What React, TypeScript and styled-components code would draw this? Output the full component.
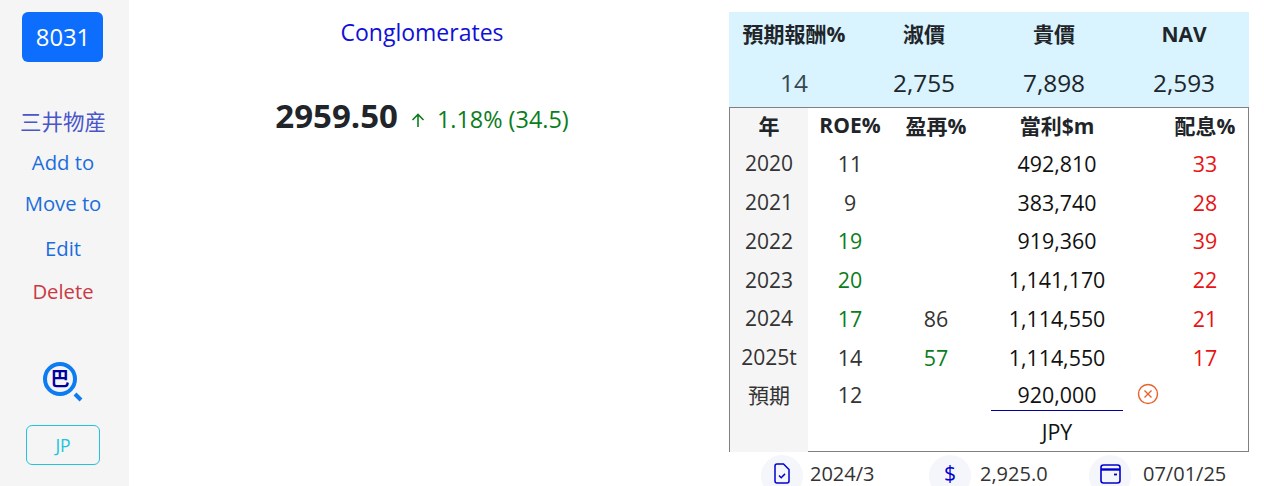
import React from "react";
import styled, { createGlobalStyle } from "styled-components";

const summary = [
  { label: "預期報酬%", value: "14", muted: true },
  { label: "淑價", value: "2,755" },
  { label: "貴價", value: "7,898" },
  { label: "NAV", value: "2,593" },
];

type Tone = "plain" | "good" | "bad";

const rows: { year: string; roe: string; roeTone?: Tone; reinvest?: string; reinvestTone?: Tone; profit: string; payout: string }[] = [
  { year: "2020", roe: "11", profit: "492,810", payout: "33" },
  { year: "2021", roe: "9", profit: "383,740", payout: "28" },
  { year: "2022", roe: "19", roeTone: "good", profit: "919,360", payout: "39" },
  { year: "2023", roe: "20", roeTone: "good", profit: "1,141,170", payout: "22" },
  { year: "2024", roe: "17", roeTone: "good", reinvest: "86", profit: "1,114,550", payout: "21" },
  { year: "2025t", roe: "14", reinvest: "57", reinvestTone: "good", profit: "1,114,550", payout: "17" },
];

const App: React.FC = () => {
  return (
    <Page>
      <GlobalStyle />
      <Sidebar>
        <CodeButton>8031</CodeButton>
        <CompanyName>三井物産</CompanyName>
        <SideLink $top={9}>Add to</SideLink>
        <SideLink $top={10}>Move to</SideLink>
        <SideLink $top={14}>Edit</SideLink>
        <SideLink $top={12} $danger>
          Delete
        </SideLink>
        <SearchIcon viewBox="0 0 42 42" width="42" height="42">
          <circle cx="18" cy="18" r="15" fill="none" stroke="#0d7cf0" strokeWidth="4" />
          <SearchGlyph x="18" y="25" textAnchor="middle">
            巴
          </SearchGlyph>
          <path d="M33 33l6 6" stroke="#0d7cf0" strokeWidth="4" />
        </SearchIcon>
        <MarketButton>JP</MarketButton>
      </Sidebar>

      <Main>
        <Sector>Conglomerates</Sector>
        <Quote>
          <Price>2959.50</Price>
          <UpArrow viewBox="0 0 16 16" width="16" height="16">
            <path d="M8 15V2.500M2.500 8L8 2.500l5.500 5.500" fill="none" stroke="#0a7d1c" strokeWidth="1.600" />
          </UpArrow>
          <Change>1.18% (34.5)</Change>
        </Quote>
      </Main>

      <Panel>
        <Summary>
          {summary.map((item) => (
            <SummaryCell key={item.label}>
              <SummaryLabel>{item.label}</SummaryLabel>
              <SummaryValue $muted={item.muted}>{item.value}</SummaryValue>
            </SummaryCell>
          ))}
        </Summary>

        <Table>
          <YearCell $head>年</YearCell>
          <HeadCell>ROE%</HeadCell>
          <HeadCell>盈再%</HeadCell>
          <HeadCell>當利$m</HeadCell>
          <Cell />
          <HeadCell>配息%</HeadCell>

          {rows.map((row) => (
            <React.Fragment key={row.year}>
              <YearCell>{row.year}</YearCell>
              <Cell $tone={row.roeTone}>{row.roe}</Cell>
              <Cell $tone={row.reinvestTone}>{row.reinvest}</Cell>
              <Cell $dark>{row.profit}</Cell>
              <Cell />
              <Cell $tone="bad">{row.payout}</Cell>
            </React.Fragment>
          ))}

          <YearCell>預期</YearCell>
          <Cell>12</Cell>
          <Cell />
          <Cell>
            <ForecastInput>920,000</ForecastInput>
          </Cell>
          <Cell>
            <ClearIcon viewBox="0 0 22 22" width="22" height="22">
              <circle cx="11" cy="11" r="9.500" fill="none" stroke="#e8612c" strokeWidth="1.400" />
              <path d="M7.500 7.500l7 7M14.500 7.500l-7 7" stroke="#e8612c" strokeWidth="1.400" />
            </ClearIcon>
          </Cell>
          <Cell />

          <YearCell />
          <Cell />
          <Cell />
          <Cell $dark>JPY</Cell>
          <Cell />
          <Cell />
        </Table>

        <Footer>
          <FooterItem>
            <IconDisc>
              <svg viewBox="0 0 16 21" width="16" height="21">
                <path d="M3 1h6.500l5.500 5.500V18a2 2 0 0 1-2 2H3a2 2 0 0 1-2-2V3a2 2 0 0 1 2-2z" fill="none" stroke="#0000d0" strokeWidth="1.500" />
                <path d="M5 12.500l2.200 2.200 3.800-3.800" fill="none" stroke="#0000d0" strokeWidth="1.500" />
              </svg>
            </IconDisc>
            <FooterText $gap={7}>2024/3</FooterText>
          </FooterItem>
          <FooterItem>
            <IconDisc>
              <Dollar>$</Dollar>
            </IconDisc>
            <FooterText $gap={9}>2,925.0</FooterText>
          </FooterItem>
          <FooterItem>
            <IconDisc>
              <svg viewBox="0 0 21 21" width="21" height="21">
                <rect x="1" y="2" width="19" height="18" rx="2.500" fill="none" stroke="#0000d0" strokeWidth="1.600" />
                <path d="M1 6.500h19" stroke="#0000d0" strokeWidth="2.400" />
                <path d="M14 11.500h3" stroke="#0000d0" strokeWidth="1.800" />
              </svg>
            </IconDisc>
            <FooterText $gap={12}>07/01/25</FooterText>
          </FooterItem>
        </Footer>
      </Panel>
    </Page>
  );
};

const GlobalStyle = createGlobalStyle`
  html, body {
    margin: 0;
    padding: 0;
    background: #fff;
    overflow: hidden;
  }
  * {
    box-sizing: border-box;
  }
  body {
    font-family: "Open Sans", "Noto Sans CJK TC", sans-serif;
    color: #212529;
  }
`;

const Page = styled.div`
  display: flex;
  width: 1264px;
  height: 486px;
  overflow: hidden;
`;

const Sidebar = styled.aside`
  display: flex;
  flex-direction: column;
  align-items: center;
  flex: 0 0 129px;
  height: 486px;
  padding: 12px 3px 0 0;
  background: #f5f5f5;
  font-size: 20.3px;
`;

const CodeButton = styled.div`
  display: flex;
  align-items: center;
  justify-content: center;
  width: 81px;
  height: 50px;
  margin-right: 2px;
  padding-left: 2px;
  border-radius: 6px;
  background: #0d6efd;
  color: #fff;
  font-size: 23.800px;
`;

const CompanyName = styled.div`
  margin-top: 44px;
  color: #4a55c8;
  font-size: 21.500px;
  line-height: 32px;
`;

const SideLink = styled.div<{ $top?: number; $danger?: boolean }>`
  margin-top: ${(p) => p.$top ?? 6}px;
  color: ${(p) => (p.$danger ? "#c93a45" : "#1c6ddc")};
  line-height: 31px;
`;

const SearchIcon = styled.svg`
  margin-top: 54px;
`;

const SearchGlyph = styled.text`
  fill: #0000a0;
  font-family: "Noto Sans CJK TC", sans-serif;
  font-size: 19px;
  font-weight: 700;
`;

const MarketButton = styled.div`
  display: flex;
  align-items: center;
  justify-content: center;
  width: 74px;
  height: 40px;
  margin-top: 22px;
  border: 1px solid #22c3dc;
  border-radius: 6px;
  color: #22c3dc;
  font-size: 17.500px;
`;

const Main = styled.main`
  flex: 0 0 586px;
  display: flex;
  flex-direction: column;
  align-items: center;
  padding-top: 16px;
`;

const Sector = styled.div`
  color: #1010d8;
  font-size: 23px;
  line-height: 33px;
`;

const Quote = styled.div`
  display: flex;
  align-items: center;
  margin-top: 43px;
`;

const Price = styled.span`
  font-size: 33px;
  font-weight: 700;
  line-height: 48px;
`;

const UpArrow = styled.svg`
  margin: 7px 0 0 12px;
`;

const Change = styled.span`
  margin: 5px 0 0 11px;
  color: #0a7d1c;
  font-size: 23.400px;
`;

const Panel = styled.section`
  flex: 0 0 520px;
  min-width: 0;
  margin-left: 14px;
  padding-top: 12px;
`;

const Summary = styled.div`
  display: grid;
  grid-template-columns: repeat(4, 1fr);
  height: 95px;
  background: #d9f3ff;
`;

const SummaryCell = styled.div`
  display: flex;
  flex-direction: column;
  align-items: center;
`;

const SummaryLabel = styled.div`
  margin-top: 6px;
  font-size: 21px;
  font-weight: 700;
  line-height: 32px;
`;

const SummaryValue = styled.div<{ $muted?: boolean }>`
  margin-top: 15px;
  font-size: 24.400px;
  line-height: 36px;
  color: ${(p) => (p.$muted ? "#37474f" : "#212529")};
`;

const Table = styled.div`
  display: grid;
  grid-template-columns: 78px 84px 88px 154px 28px 86px;
  grid-template-rows: 36px repeat(6, 38.750px) 35px 40px;
  height: 345px;
  border: 1px solid #808080;
`;

const Cell = styled.div<{ $tone?: Tone; $dark?: boolean }>`
  display: flex;
  align-items: center;
  justify-content: center;
  font-size: 21.400px;
  color: ${(p) =>
    p.$tone === "good" ? "#0a7d1c" : p.$tone === "bad" ? "#e81414" : p.$dark ? "#111" : "#333"};
`;

const HeadCell = styled(Cell)`
  padding-bottom: 3px;
  color: #212529;
  font-size: 21px;
  font-weight: 700;
  white-space: nowrap;
`;

const YearCell = styled.div<{ $head?: boolean }>`
  display: flex;
  align-items: center;
  justify-content: center;
  padding-bottom: ${(p) => (p.$head ? 3 : 0)}px;
  background: #f5f5f5;
  color: ${(p) => (p.$head ? "#212529" : "#333")};
  font-size: 21px;
  font-weight: ${(p) => (p.$head ? 700 : 400)};
`;

const ForecastInput = styled.div`
  align-self: flex-start;
  width: 132px;
  height: 34px;
  border-bottom: 1px solid #0000a0;
  color: #111;
  line-height: 35px;
  text-align: center;
`;

const ClearIcon = styled.svg`
  flex: none;
`;

const Footer = styled.div`
  display: grid;
  grid-template-columns: 168px 160px 1fr;
  height: 34px;
  padding: 3px 0 0 32px;
`;

const FooterItem = styled.div`
  display: flex;
  align-items: flex-start;
`;

const IconDisc = styled.div`
  display: flex;
  justify-content: center;
  flex: none;
  width: 42px;
  height: 42px;
  padding-top: 8px;
  border-radius: 50%;
  background: #f5f6fb;
`;

const Dollar = styled.span`
  color: #0000d0;
  font-size: 21px;
  font-weight: 500;
  line-height: 21px;
`;

const FooterText = styled.span<{ $gap: number }>`
  margin: 5px 0 0 ${(p) => p.$gap}px;
  color: #333;
  font-size: 20px;
  line-height: 27px;
`;

export default App;
